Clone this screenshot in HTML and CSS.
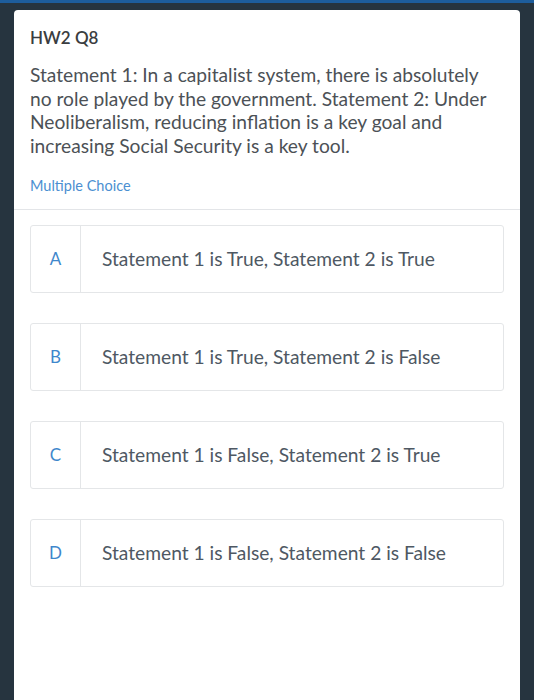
FILE: index.html
```html
<!DOCTYPE html>
<html lang="en">
<head>
    <meta charset="UTF-8">
    <meta name="viewport" content="width=device-width, initial-scale=1.0">
    <title>HW2 Q8</title>
    <link rel="stylesheet" href="styles.css">
</head>
<body>
    <div class="top-bar"></div>
    <div class="question-card">
        <!-- Question header -->
        <div class="question-head">
            <h1 class="question-title">HW2 Q8</h1>
            <p class="question-text">Statement 1: In a capitalist system, there is absolutely no role played by the government. Statement 2: Under Neoliberalism, reducing inflation is a key goal and increasing Social Security is a key tool.</p>
            <div class="question-type">Multiple Choice</div>
        </div>

        <!-- Answer options -->
        <div class="choice-list">
            <div class="choice">
                <div class="choice-letter">A</div>
                <div class="choice-text">Statement 1 is True, Statement 2 is True</div>
            </div>
            <div class="choice">
                <div class="choice-letter">B</div>
                <div class="choice-text">Statement 1 is True, Statement 2 is False</div>
            </div>
            <div class="choice">
                <div class="choice-letter">C</div>
                <div class="choice-text">Statement 1 is False, Statement 2 is True</div>
            </div>
            <div class="choice">
                <div class="choice-letter">D</div>
                <div class="choice-text">Statement 1 is False, Statement 2 is False</div>
            </div>
        </div>
    </div>
</body>
</html>
```

FILE: styles.css
```css
html, body {
    height: 100%;
}

body {
    margin: 0;
    background: #26343f;
    font-family: Lato, "Noto Sans", sans-serif;
    display: flex;
    flex-direction: column;
    overflow: hidden;
}

.top-bar {
    height: 3px;
    background: #1d5d9c;
    flex-shrink: 0;
}

.question-card {
    flex: 1;
    margin: 7px 14px 0 14px;
    background: #fff;
    border-radius: 4px 4px 0 0;
}

.question-head {
    padding: 17px 16px 15px 16px;
    border-bottom: 1px solid #e3e5e8;
}

.question-title {
    margin: 0;
    font-size: 17px;
    font-weight: 600;
    color: #3a3d40;
    line-height: 22px;
}

.question-text {
    margin: 14px 0 0 0;
    font-size: 19.2px;
    line-height: 23.7px;
    color: #4c5156;
}

.question-type {
    margin-top: 19px;
    font-size: 14.5px;
    line-height: 17px;
    color: #4b8fd1;
}

.choice-list {
    display: flex;
    flex-direction: column;
    gap: 30px;
    padding: 15px 16px 0 16px;
}

.choice {
    display: flex;
    height: 66px;
    border: 1px solid #e4e6e8;
    border-radius: 3px;
}

.choice-letter {
    width: 49px;
    border-right: 1px solid #e4e6e8;
    display: flex;
    align-items: center;
    justify-content: center;
    font-size: 17px;
    color: #3f87cc;
}

.choice-text {
    display: flex;
    align-items: center;
    padding-left: 21px;
    font-size: 19.2px;
    color: #4e5863;
}
```
